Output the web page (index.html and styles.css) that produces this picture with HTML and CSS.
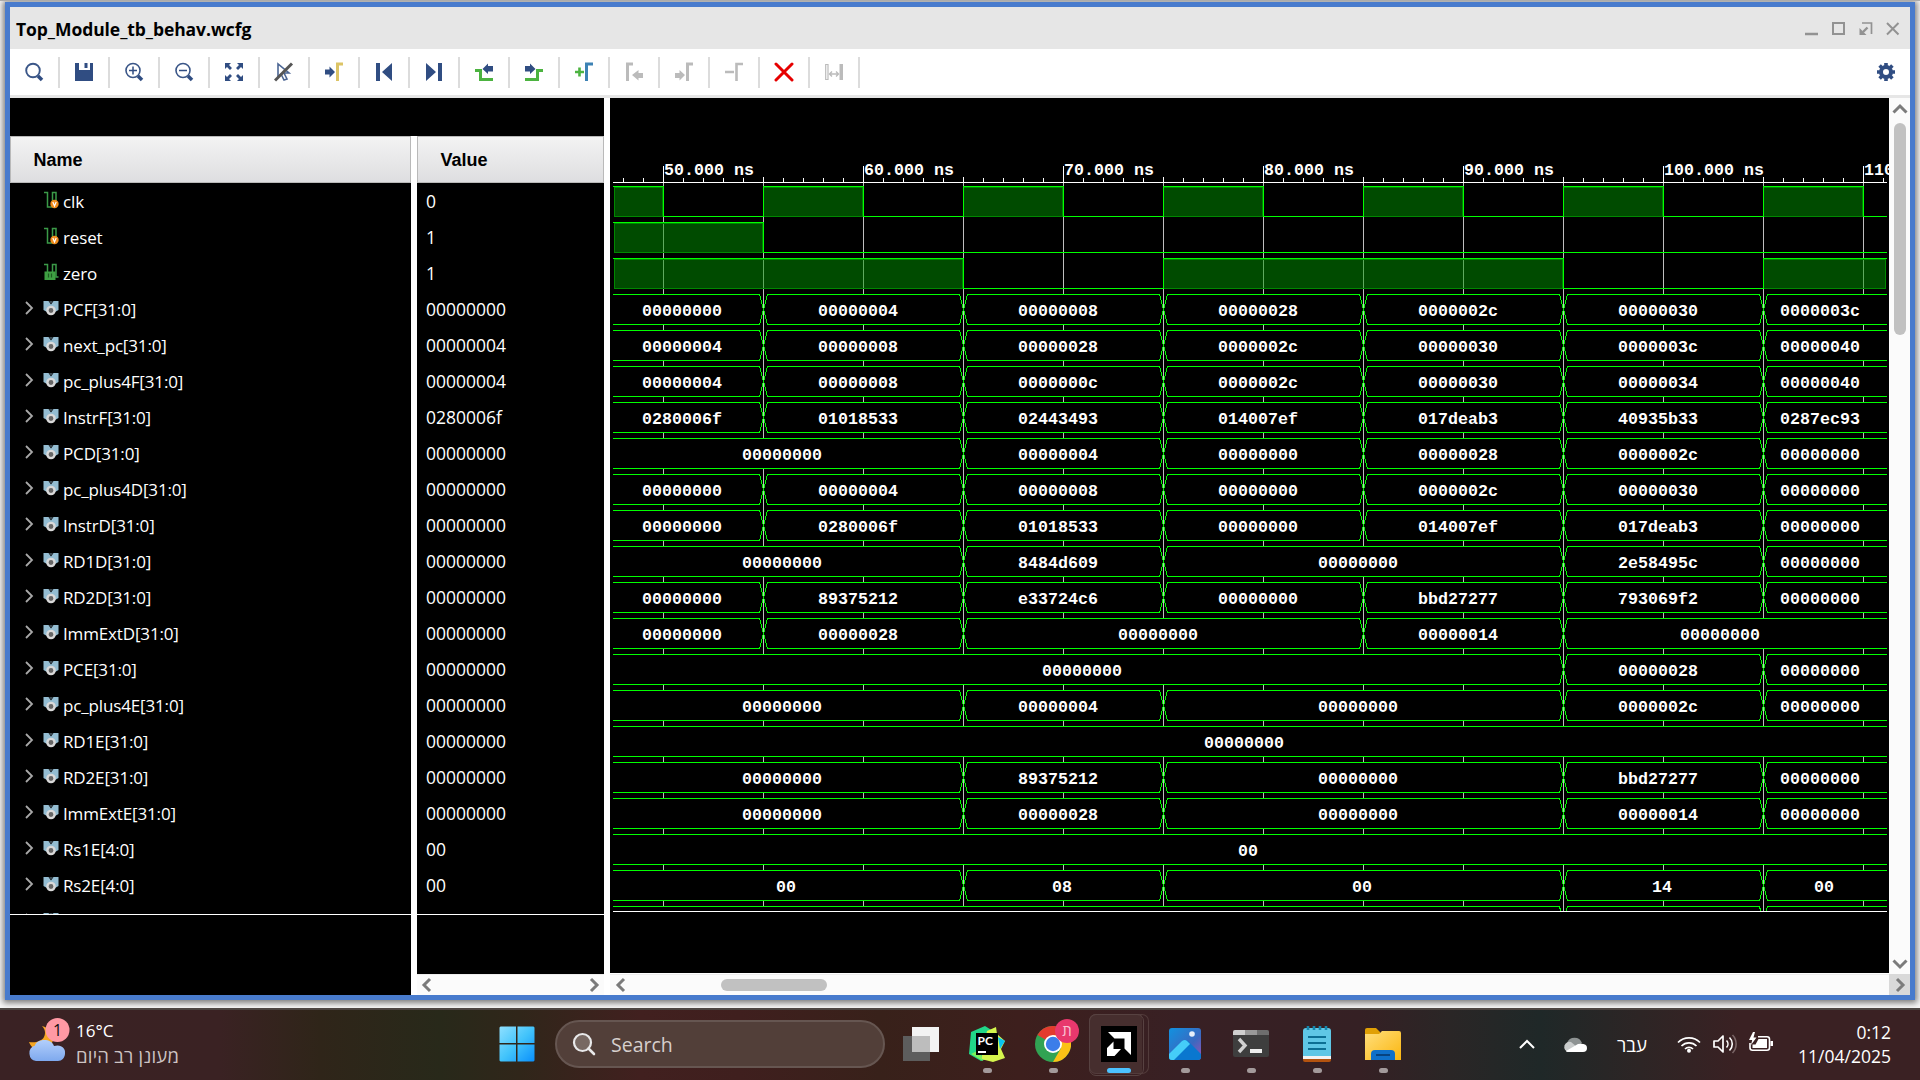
FILE: index.html
```html
<!DOCTYPE html>
<html lang="en">
<head>
<meta charset="utf-8">
<title>Top_Module_tb_behav.wcfg</title>
<link rel="stylesheet" href="styles.css">
</head>
<body>
<svg class="defs" aria-hidden="true">
  <defs>
    <symbol id="i-in" viewBox="0 0 16 18">
      <path d="M0 1.500h3.500v14.500h5M8.500 12V1.500h3.500V12" fill="none" stroke="#3b9a48" stroke-width="1.500"/>
      <ellipse cx="10.500" cy="13" rx="4.200" ry="4.200" fill="#f08c1c"/>
      <path d="M8.800 11l1.700 4 1.700-4" fill="none" stroke="#fff" stroke-width="1.200"/>
    </symbol>
    <symbol id="i-out" viewBox="0 0 16 18">
      <path d="M0 1.500h3.500V9M8.500 9V1.500h3.500V14h2.500" fill="none" stroke="#3b9a48" stroke-width="1.500"/>
      <path d="M.5 8.500h11V17H.5z" fill="#3fa043"/>
      <path d="M4.500 10.500v4M7.500 10.500v4" stroke="#1e5a22" stroke-width="1.200"/>
    </symbol>
    <symbol id="i-bus" viewBox="0 0 16 16">
      <path d="M.5 1h5l2.500 3.500L10.500 1h5v9L12 12H4L.5 10z" fill="#94bdd2"/>
      <path d="M6 1h4L8 4z" fill="#3c4a52"/>
      <circle cx="8" cy="10.500" r="3.600" fill="#666" stroke="#d9d9d9" stroke-width="2.400"/>
    </symbol>
  </defs>
</svg>

<main class="desktop">
  <section class="window">
    <header class="titlebar">
      <h1 class="title">Top_Module_tb_behav.wcfg</h1>
      <div class="winbtns">
        <svg viewBox="0 0 14 14"><path d="M0 12h13" stroke-width="2.500"/></svg>
        <svg viewBox="0 0 14 14"><path d="M1 1h11v11H1z" stroke-width="2"/></svg>
        <svg viewBox="0 0 14 14"><path d="M3 1h9.500v11" stroke-width="1.700"/><path d="M8.500 5.500L4 10" stroke-width="2.400"/><path d="M.5 6v7h7z" fill="#929292" stroke="none"/></svg>
        <svg viewBox="0 0 14 14"><path d="M1 1l11.500 11.500M12.500 1L1 12.500" stroke-width="2"/></svg>
      </div>
    </header>

    <nav class="toolbar">
      <span class="tool"><svg viewBox="0 0 20 20"><circle cx="9" cy="8.500" r="6.800" stroke="#3a5688" stroke-width="1.900"/><path d="M14 14l4 4" stroke="#304d82" stroke-width="3.500"/></svg></span>
      <span class="tool"><svg viewBox="0 0 20 20"><path d="M1 1h4v7h11V1h3v18H1z" fill="#304d82"/><path d="M10.500 1h3v5h-3z" fill="#304d82"/></svg></span>
      <span class="tool"><svg viewBox="0 0 20 20"><circle cx="9" cy="8.500" r="7" stroke="#3a5688" stroke-width="1.600"/><path d="M5 8.500h8M9 4.500v8" stroke="#304d82" stroke-width="1.500"/><path d="M14 14l4 4" stroke="#304d82" stroke-width="3.500"/></svg></span>
      <span class="tool"><svg viewBox="0 0 20 20"><circle cx="9" cy="8.500" r="7" stroke="#3a5688" stroke-width="1.600"/><path d="M5 8.500h8" stroke="#304d82" stroke-width="1.500"/><path d="M14 14l4 4" stroke="#304d82" stroke-width="3.500"/></svg></span>
      <span class="tool"><svg viewBox="0 0 20 20"><path d="M1 1h6L5 3l3 3-2 2-3-3-2 2zM19 1h-6l2 2-3 3 2 2 3-3 2 2zM1 19h6l-2-2 3-3-2-2-3 3-2-2zM19 19h-6l2-2-3-3 2-2 3 3 2-2z" fill="#304d82"/></svg></span>
      <span class="tool"><svg viewBox="0 0 20 20"><path d="M4 2v13l3-3 3 6 3-1-3-6h5z" stroke="#4c6694" stroke-width="1.600"/><path d="M1 18.500L18 1.500" stroke="#555" stroke-width="3"/></svg></span>
      <span class="tool"><svg viewBox="0 0 20 20"><path d="M1 7.500h4.500V4.500L11 10l-5.500 5.500v-3H1z" fill="#304d82"/><path d="M13.500 19V2H19" stroke="#dcc466" stroke-width="3"/></svg></span>
      <span class="tool"><svg viewBox="0 0 20 20"><path d="M2 1h4v18H2zM18 1v18L8 10z" fill="#304d82"/></svg></span>
      <span class="tool"><svg viewBox="0 0 20 20"><path d="M14 1h4v18h-4zM2 1v18l10-9z" fill="#304d82"/></svg></span>
      <span class="tool"><svg viewBox="0 0 20 20"><path d="M1 8.500h5.500v9H19" stroke="#4cb340" stroke-width="3"/><path d="M19 4h-5V1.500L8.500 7l5.500 5V9.500h5z" fill="#304d82"/></svg></span>
      <span class="tool"><svg viewBox="0 0 20 20"><path d="M19 8.500h-5.500v9H1" stroke="#4cb340" stroke-width="3"/><path d="M1 4h5V1.500L11.500 7 6 12V9.500H1z" fill="#304d82"/></svg></span>
      <span class="tool"><svg viewBox="0 0 20 20"><path d="M1 10h9M5.500 5.500v9" stroke="#4cb340" stroke-width="2.600"/><path d="M12.500 19V2H19" stroke="#3d82b4" stroke-width="3"/></svg></span>
      <span class="tool off"><svg viewBox="0 0 20 20"><path d="M3.500 19V2H9" stroke="#bbb" stroke-width="3"/><path d="M19 11h-4.500V8L8 13l6.500 5.500V16H19z" fill="#bbb"/></svg></span>
      <span class="tool off"><svg viewBox="0 0 20 20"><path d="M13.500 19V2H19" stroke="#bbb" stroke-width="3"/><path d="M1 11h4.500V8L11 13l-5.500 5.500V16H1z" fill="#bbb"/></svg></span>
      <span class="tool off"><svg viewBox="0 0 20 20"><path d="M12.500 19V2H19M1 10h9" stroke="#bbb" stroke-width="2.600"/></svg></span>
      <span class="tool"><svg viewBox="0 0 20 20"><path d="M2 2l16 16M18 2L2 18" stroke="#e60000" stroke-width="3" stroke-linecap="round"/></svg></span>
      <span class="tool off"><svg viewBox="0 0 20 20"><path d="M1.700 2.500h2.300v15H1.700z" stroke="#bbb" stroke-width="1.200"/><path d="M15.500 2h3.500v16h-3.500z" fill="#bbb"/><path d="M5.500 12h9M8 9.500L5.500 12 8 14.500M12 9.500l2.500 2.500-2.500 2.500" stroke="#bbb" stroke-width="1.400"/></svg></span>
      <svg class="gear" viewBox="0 0 20 20"><circle cx="10" cy="10" r="5" fill="none" stroke="#304d82" stroke-width="4"/><path d="M10 1v3M10 16v3M1 10h3M16 10h3M3.600 3.600l2 2M14.400 14.400l2 2M3.600 16.400l2-2M14.400 5.600l2-2" stroke="#304d82" stroke-width="3.600"/></svg>
    </nav>

    <div class="panes">
      <div class="signals">
        <div class="col names">
          <div class="head">Name</div>
          <div class="rows" id="names"></div>
          <div class="rest"></div>
        </div>
        <div class="col values">
          <div class="head">Value</div>
          <div class="rows" id="values"></div>
          <div class="rest"></div>
          <div class="hbar">
            <svg viewBox="0 0 12 16"><path d="M9 2L3 8l6 6"/></svg>
            <svg viewBox="0 0 12 16"><path d="M3 2l6 6-6 6"/></svg>
          </div>
        </div>
      </div>
      <div class="wavepane">
        <svg id="wave" class="wave" viewBox="610 98 1279 875"></svg>
        <div class="vbar">
          <svg viewBox="0 0 16 12"><path d="M1.500 9.500L8 3l6.500 6.500"/></svg>
          <div class="vthumb"></div>
          <svg viewBox="0 0 16 12"><path d="M1.500 2.500L8 9l6.500-6.500"/></svg>
        </div>
        <div class="hbar wide">
          <svg viewBox="0 0 12 16"><path d="M9 2L3 8l6 6"/></svg>
          <div class="hthumb"></div>
        </div>
        <div class="corner"><svg viewBox="0 0 12 16"><path d="M3 2l6 6-6 6"/></svg></div>
      </div>
    </div>
  </section>
</main>

<footer class="taskbar">
  <div class="weather">
    <svg class="wicon" viewBox="0 0 44 46">
      <defs><linearGradient id="cl" x1="0" y1="0" x2="0" y2="1"><stop offset="0" stop-color="#b3cffb"/><stop offset="1" stop-color="#7ea9ee"/></linearGradient></defs>
      <path d="M14 9c3 3 4 7 2 11s-8 6-15 5c2 6 8 9 14 8 8-2 12-9 9-16-2-4-6-7-10-8z" fill="#f5a623"/>
      <path d="M8 44a8 8 0 0 1-1-15.500C8 22 23 20 26 29c7-2 12 2 11 8-.5 4-3 7-7 7z" fill="url(#cl)"/>
      <circle cx="29.500" cy="13" r="12" fill="#ff99a4"/>
      <text x="29.500" y="19" text-anchor="middle" class="badge">1</text>
    </svg>
    <div class="wtext"><span>16°C</span><span class="dim" dir="rtl">מעונן רב היום</span></div>
  </div>

  <div class="apps">
    <svg class="start" viewBox="0 0 36 36">
      <defs><linearGradient id="ws" x1="0" y1="0" x2="1" y2="1"><stop offset="0" stop-color="#8fe0ff"/><stop offset=".5" stop-color="#43c4fb"/><stop offset="1" stop-color="#0a90fb"/></linearGradient></defs>
      <path d="M1.500.5H17v16.500H.5V1.500zM18.500.5H34.500l1 1V17h-17zM.5 18.500H17V35.500H1.500l-1-1zM18.500 18.500h17v16l-1 1h-16z" fill="url(#ws)"/>
    </svg>
    <div class="search">
      <svg viewBox="0 0 24 24"><circle cx="10.500" cy="10.500" r="8.500" fill="#776862" stroke="#e9e9ea" stroke-width="2.200"/><path d="M16.500 16.500l5.500 5.500" stroke="#e9e9ea" stroke-width="2.600" stroke-linecap="round"/></svg>
      <span>Search</span>
    </div>
    <div class="app"><svg viewBox="0 0 36 36"><path d="M9 1h27v25H9z" fill="#f3f3f3"/><path d="M0 10h27v25H0z" fill="#5d5d5d"/><path d="M9 10h18v16H9z" fill="#bdbdbd"/></svg></div>
    <div class="app run"><svg viewBox="0 0 36 36"><path d="M2 6l14-6 8 5v26l-12 4L0 28z" fill="#21d789"/><path d="M18 5l9-4 1 7 8 7-4 8 4 9-12 4-12-3z" fill="#d5f54d"/><path d="M29 11l7 4-5 8z" fill="#07c3f2"/><path d="M2 28l8-4 4 11z" fill="#7cf05b"/><path d="M7 7h22v22H7z"/><path d="M9 25h8v2H9z" fill="#fff"/><text x="8.500" y="18.500" class="pc">PC</text></svg></div>
    <div class="app run"><svg viewBox="0 0 36 36"><circle cx="18" cy="18" r="18" fill="#31a353"/><path d="M18 18L2.400 9A18 18 0 0 1 33.600 9z" fill="#e33b2e"/><path d="M18 9h15.600A18 18 0 0 1 18 36l7.800-13.500z" fill="#fbc116"/><circle cx="18" cy="18" r="9" fill="#fff"/><circle cx="18" cy="18" r="7.200" fill="#3b7de9"/></svg><span class="avatar">ת</span></div>
    <div class="app run active"><svg viewBox="0 0 36 36"><path d="M0 0h36v36H0z"/><path d="M7 6h23v23l-6.500-6.500V12.500H13.500z" fill="#fff"/><path d="M12.500 15.500V23H20l-6.500 7H6v-8z" fill="#fff"/></svg></div>
    <div class="app run"><svg viewBox="0 0 36 36"><defs><linearGradient id="ph" x1="0" y1="0" x2="1" y2="1"><stop offset="0" stop-color="#1192e0"/><stop offset=".6" stop-color="#3a69c0"/><stop offset="1" stop-color="#9a52b5"/></linearGradient></defs><rect x="2" y="2" width="32" height="32" rx="3" fill="url(#ph)"/><path d="M2 29l13-14q3-2 6 0l13 13v3q0 3-3 3H5q-3 0-3-3z" fill="#0a77cf"/><path d="M2 28l13-13q3-2 5 0l3 3L7 34H5q-3 0-3-3z" fill="#45cdf8"/><circle cx="25" cy="8" r="2.800" fill="#e6effa"/></svg></div>
    <div class="app run"><svg viewBox="0 0 36 36"><rect y="4" width="36" height="27" rx="2" fill="#3e3e3e"/><path d="M0 9V6q0-2 2-2h10v5z" fill="#cfcfcf"/><path d="M12 4h12v5H12z" fill="#999"/><path d="M24 4h10q2 0 2 2v3H24z" fill="#6e6e6e"/><path d="M6 13l6 6.500L6 26" fill="none" stroke="#d0d0d0" stroke-width="3.400"/><path d="M17 23h12v4H17z" fill="#eee"/></svg></div>
    <div class="app run"><svg viewBox="0 0 36 36"><path d="M4 32h28v2q0 2-2 2H6q-2 0-2-2z" fill="#b4530f"/><path d="M4 29h28v4H4z" fill="#f3f3f3"/><path d="M4 5q0-3 3-3h22q3 0 3 3v25H4z" fill="#5fc7e6"/><path d="M9 11h18M9 17h18M9 23h18" stroke="#0c6f94" stroke-width="2"/><path d="M9 0v4M15 0v4M21 0v4M27 0v4" stroke="#1587ad" stroke-width="2.600"/></svg></div>
    <div class="app run"><svg viewBox="0 0 36 36"><defs><linearGradient id="fo" x1="0" y1="0" x2="1" y2="1"><stop offset="0" stop-color="#ffdf7d"/><stop offset="1" stop-color="#fbb60f"/></linearGradient></defs><path d="M0 4q0-2 2-2h9l4 4v4H0z" fill="#e0a005"/><path d="M0 8h14l3-3h17q2 0 2 2v27H0z" fill="url(#fo)"/><path d="M6 34V28q0-4 4-4h16q4 0 4 4v6z" fill="#0f70c9"/><path d="M11 29h14" stroke="#073f78" stroke-width="1.800"/></svg></div>
  </div>

  <div class="tray">
    <svg class="up" viewBox="0 0 16 10"><path d="M1 9l7-7 7 7" fill="none" stroke="#fff" stroke-width="2"/></svg>
    <svg class="cloud" viewBox="0 0 24 17"><path d="M4 7a8 8 0 0 1 15 0l-7 6z" fill="#8e9393"/><path d="M5 16a5 5 0 1 1 3-10l12 10z" fill="#c9cccc"/><path d="M3 15l12-7q9-1 9 4 0 4-4 4H5q-2 0-2-1z" fill="#fff"/></svg>
    <span class="lang">עבר</span>
    <svg class="wifi" viewBox="0 0 24 18"><path d="M1 7.500a15.500 15.500 0 0 1 22 0M4.500 11a10.500 10.500 0 0 1 15 0M8 14a5.800 5.800 0 0 1 8 0" fill="none" stroke="#fff" stroke-width="1.700"/><circle cx="12" cy="15.800" r="2" fill="#fff"/></svg>
    <svg class="spk" viewBox="0 0 24 20"><path d="M1 7h4l5-5v16l-5-5H1z" fill="none" stroke="#fff" stroke-width="1.700" stroke-linejoin="round"/><path d="M13.500 6.500a5 5 0 0 1 0 7M16.500 3.500a9 9 0 0 1 0 13" fill="none" stroke="#fff" stroke-width="1.600"/><path d="M19.500 1a13 13 0 0 1 0 18" fill="none" stroke="#7a6566" stroke-width="1.600"/></svg>
    <svg class="bat" viewBox="0 0 24 20"><path d="M9 4.800h9q2.500 0 2.500 2.500v8.400q0 2.500-2.500 2.500H3.500Q1 18.200 1 15.700V11" fill="none" stroke="#fff" stroke-width="1.600"/><path d="M9.500 7H18v9H3.500v-3.500h3z" fill="#fff"/><path d="M21.500 9H24v5h-2.500zM4 0L0 8h3.200L2 13l5.500-7.500H4.500L6 0z" fill="#fff"/></svg>
    <div class="clock"><span>0:12</span><span>11/04/2025</span></div>
  </div>
</footer>
<script src="wave.js"></script>
</body>
</html>
```
FILE: styles.css
```css
* { box-sizing: border-box; }
body {
  margin: 0;
  width: 1920px;
  height: 1080px;
  overflow: hidden;
  display: flex;
  flex-direction: column;
  background: #fff;
  font-family: "Open Sans", "Noto Sans", sans-serif;
}
.defs { position: absolute; width: 0; height: 0; }
.desktop {
  height: 1008px;
  padding: 1px 5px 8px;
  border-top: 1px solid #ababab;
  background: #f7f7f7;
  overflow: hidden;
}
.window {
  height: 998px;
  border: 5px solid #487bcd;
  background: #fff;
  box-shadow: 0 1px 6px 2px rgba(0, 0, 0, .5);
  display: flex;
  flex-direction: column;
}
.titlebar {
  height: 42px;
  background: #e6e6e6;
  display: flex;
  justify-content: space-between;
  align-items: center;
  padding: 2px 10px 0 6px;
}
.title { margin: 0; font-size: 17.5px; font-weight: 700; letter-spacing: -.07px; }
.winbtns { display: flex; gap: 13px; }
.winbtns svg { width: 14px; height: 14px; fill: none; stroke: #929292; }
.toolbar {
  height: 49px;
  border-bottom: 3px solid #e6e6e6;
  display: flex;
  align-items: center;
}
.tool {
  width: 50px;
  height: 31px;
  border-right: 2px solid #dcdcdc;
  display: flex;
  align-items: center;
  justify-content: center;
}
.tool svg { width: 20px; height: 20px; fill: none; }
.gear { width: 20px; height: 20px; margin-left: auto; margin-right: 14px; }

.panes { flex: 1; display: flex; gap: 6px; }
.signals {
  width: 594px;
  display: flex;
  gap: 6px;
  border-top: 38px solid #000;
}
.col { display: flex; flex-direction: column; }
.names { width: 401px; }
.values { width: 187px; }
.head {
  height: 47px;
  border: 1px solid #b9b9b9;
  background: linear-gradient(#f3f3f3, #dedee0);
  font: bold 18px/47px "Liberation Sans", Arial, sans-serif;
  padding-left: 22.5px;
}
.rows { height: 731px; overflow: hidden; background: #000; }
.rest { flex: 1; background: #000; border-top: 1px solid #fff; }
.row {
  height: 36px;
  display: flex;
  align-items: center;
  color: #fff;
  font-size: 17px;
  white-space: nowrap;
}
.names .row { padding-left: 14px; letter-spacing: -.15px; }
.values .row { padding-left: 9px; font-size: 17.5px; }
.row .chev { width: 10px; height: 14px; fill: none; stroke: #a8a8a8; stroke-width: 1.8; margin: 0 9px 2px 0; }
.row .kind { width: 16px; height: 16px; margin: 0 4px 3px 0; }
.row .kind.bit { height: 18px; margin-left: 20px; margin-right: 3px; }

.hbar {
  height: 21px;
  background: #fbfbfb;
  border-top: 1px solid #ededed;
  display: flex;
  align-items: center;
  justify-content: space-between;
  padding: 0 4px;
}
.hbar svg, .corner svg { width: 12px; height: 16px; }
.hbar path, .vbar path, .corner path { fill: none; stroke: #7b7b7b; stroke-width: 3; }
.wavepane {
  width: 1300px;
  display: grid;
  grid-template-columns: 1279px 21px;
  grid-template-rows: 876px 21px;
}
.wave { width: 1279px; height: 875px; background: #000; display: block; }
.wave text {
  font: bold 16.67px "Courier New", "Liberation Mono", monospace;
  fill: #fff;
}
.hbar.wide { justify-content: flex-start; gap: 94px; padding-left: 5px; }
.hthumb { width: 106px; height: 12px; border-radius: 6px; background: #c1c1c1; }
.vbar {
  background: #fbfbfb;
  display: flex;
  flex-direction: column;
  align-items: center;
  padding: 5px 0 4px;
}
.vbar svg { width: 16px; height: 12px; }
.vthumb { width: 12px; height: 212px; border-radius: 6px; background: #c1c1c1; margin: 8px 0 auto; }
.corner { background: #d9d9d9; display: flex; align-items: center; justify-content: center; }

.taskbar {
  height: 72px;
  border-top: 2px solid #4d4643;
  display: flex;
  align-items: stretch;
  background: linear-gradient(90deg, #3a2224 0, #3a2223 220px, #2f2519 320px, #28291a 440px, #30261a 520px, #41201f 640px, #3f1f1e 740px, #38211a 880px, #3d1f1d 1020px, #382024 1180px, #352024 1360px, #2a2626 1450px, #1f2828 1540px, #2d2525 1640px, #3a2123 1740px, #3a2123 1920px);
  color: #fff;
}
.weather { width: 500px; padding: 7px 0 0 28px; display: flex; gap: 4px; }
.wicon { width: 44px; height: 46px; }
.badge { font-size: 16px; fill: #111; }
.wtext { display: flex; flex-direction: column; align-items: flex-start; font-size: 17px; line-height: 24px; padding-top: 2px; }
.wtext .dim { color: #cdc4c4; font-size: 18.5px; letter-spacing: .2px; line-height: 26px; }
.apps { width: 920px; display: flex; align-items: flex-start; }
.start { width: 36px; height: 36px; margin: 16px 19px 0 -1px; }
.search {
  width: 330px;
  height: 48px;
  margin: 10px 3px 0 1px;
  border: 2px solid #665651;
  border-radius: 24px;
  background: #523f39;
  display: flex;
  align-items: center;
  gap: 15px;
  padding-left: 15px;
  font-size: 19.5px;
  color: #d6cfcd;
}
.search svg { width: 24px; height: 24px; }
.app {
  width: 60px;
  height: 60px;
  margin: 4px 3px 0;
  display: flex;
  justify-content: center;
  padding-top: 12px;
  position: relative;
}
.app svg { width: 36px; height: 36px; }
.run::after {
  content: "";
  position: absolute;
  left: 26px;
  bottom: 1px;
  width: 9px;
  height: 5px;
  border-radius: 3px;
  background: #a39a9b;
}
.active {
  background: linear-gradient(#462e2e, #462e2e) 0 0 / 53px 60px no-repeat;
  border-radius: 7px;
  box-shadow: inset 0 0 0 1px #523b3b;
}
.active::before {
  content: "";
  position: absolute;
  left: 0;
  top: 0;
  width: 53px;
  height: 60px;
  border: 1px solid #574241;
  border-radius: 7px;
}
.active svg { position: relative; }
.active::after { left: 18px; width: 24px; background: #4cc2ff; }
.avatar {
  position: absolute;
  left: 32px;
  top: 5px;
  width: 24px;
  height: 24px;
  border-radius: 50%;
  background: #e8386d;
  color: #f9c4d4;
  font-size: 15px;
  line-height: 22px;
  text-align: center;
}
.pc { font: bold 12px Lato, sans-serif; fill: #fff; }
.tray { flex: 1; display: flex; align-items: center; padding: 0 29px 2px 99px; }
.tray svg { flex: none; }
.up { width: 16px; height: 10px; }
.cloud { width: 24px; height: 17px; margin-left: 28px; }
.lang { width: 32px; margin: 0 29px; font-size: 18.5px; text-align: center; }
.wifi { width: 24px; height: 18px; }
.spk { width: 24px; height: 20px; margin-left: 12px; }
.bat { width: 24px; height: 20px; margin: 0 0 4px 12px; }
.clock {
  margin-left: auto;
  display: flex;
  flex-direction: column;
  align-items: flex-end;
  font-size: 17.500px;
  line-height: 24px;
}
```
FILE: wave.js
```js
const LEFT = 613, RIGHT = 1887, AXIS = 182, BOTTOM = 911, PITCH = 36;

// Each bus lists [start, value] pairs; a segment runs to the next start.
const Z = "00000000";
const A = LEFT, B = 763, C = 963, D = 1163, E = 1363, F = 1563, G = 1763;
const bits = [
  ["clk", "0", [[A, 663], [B, 863], [C, 1063], [D, 1263], [E, 1463], [F, 1663], [G, 1863]]],
  ["reset", "1", [[A, B]]],
  ["zero", "1", [[A, C], [D, F], [G, RIGHT]]],
];
const buses = [
  ["PCF[31:0]", Z, [[A, Z], [B, "00000004"], [C, "00000008"], [D, "00000028"], [E, "0000002c"], [F, "00000030"], [G, "0000003c"]]],
  ["next_pc[31:0]", "00000004", [[A, "00000004"], [B, "00000008"], [C, "00000028"], [D, "0000002c"], [E, "00000030"], [F, "0000003c"], [G, "00000040"]]],
  ["pc_plus4F[31:0]", "00000004", [[A, "00000004"], [B, "00000008"], [C, "0000000c"], [D, "0000002c"], [E, "00000030"], [F, "00000034"], [G, "00000040"]]],
  ["InstrF[31:0]", "0280006f", [[A, "0280006f"], [B, "01018533"], [C, "02443493"], [D, "014007ef"], [E, "017deab3"], [F, "40935b33"], [G, "0287ec93"]]],
  ["PCD[31:0]", Z, [[A, Z], [C, "00000004"], [D, Z], [E, "00000028"], [F, "0000002c"], [G, Z]]],
  ["pc_plus4D[31:0]", Z, [[A, Z], [B, "00000004"], [C, "00000008"], [D, Z], [E, "0000002c"], [F, "00000030"], [G, Z]]],
  ["InstrD[31:0]", Z, [[A, Z], [B, "0280006f"], [C, "01018533"], [D, Z], [E, "014007ef"], [F, "017deab3"], [G, Z]]],
  ["RD1D[31:0]", Z, [[A, Z], [C, "8484d609"], [D, Z], [F, "2e58495c"], [G, Z]]],
  ["RD2D[31:0]", Z, [[A, Z], [B, "89375212"], [C, "e33724c6"], [D, Z], [E, "bbd27277"], [F, "793069f2"], [G, Z]]],
  ["ImmExtD[31:0]", Z, [[A, Z], [B, "00000028"], [C, Z], [E, "00000014"], [F, Z]]],
  ["PCE[31:0]", Z, [[A, Z], [F, "00000028"], [G, Z]]],
  ["pc_plus4E[31:0]", Z, [[A, Z], [C, "00000004"], [D, Z], [F, "0000002c"], [G, Z]]],
  ["RD1E[31:0]", Z, [[A, Z]]],
  ["RD2E[31:0]", Z, [[A, Z], [C, "89375212"], [D, Z], [F, "bbd27277"], [G, Z]]],
  ["ImmExtE[31:0]", Z, [[A, Z], [C, "00000028"], [D, Z], [F, "00000014"], [G, Z]]],
  ["Rs1E[4:0]", "00", [[A, "00"]]],
  ["Rs2E[4:0]", "00", [[A, "00"], [C, "08"], [D, "00"], [F, "14"], [G, "00"]]],
  ["", "", [[A, ""], [F, ""], [G, ""]]],
];

const chevron = '<svg class="chev" viewBox="0 0 10 14"><path d="M2 1l6 6-6 6"/></svg>';
let names = "", values = "";
bits.forEach(([name, value], i) => {
  const icon = i === 2 ? "i-out" : "i-in";
  names += `<div class="row"><svg class="kind bit"><use href="#${icon}"/></svg>${name}</div>`;
  values += `<div class="row">${value}</div>`;
});
buses.forEach(([name, value]) => {
  names += `<div class="row">${chevron}<svg class="kind"><use href="#i-bus"/></svg>${name}</div>`;
  values += `<div class="row">${value}</div>`;
});
document.getElementById("names").innerHTML = names;
document.getElementById("values").innerHTML = values;

const rect = (x, y, w, h, fill) => `<rect x="${x}" y="${y}" width="${w}" height="${h}" fill="${fill}"/>`;
const GREEN = "#00ff00";
let out = "";

for (let x = 663; x < RIGHT; x += 100) out += rect(x, AXIS, 1, BOTTOM - AXIS, "#bebebe");
out += rect(LEFT, AXIS, RIGHT - LEFT, 1, "#fff");
for (let x = 623; x < RIGHT; x += 20) {
  const t = (x - 663) % 200 === 0 ? 166 : (x - 663) % 100 === 0 ? 177 : 178;
  out += rect(x, t, 1, AXIS - t, "#fff");
}
for (let n = 0; n < 7; n++) {
  out += `<text x="${664 + n * 200}" y="175">${50 + n * 10}.000 ns</text>`;
}

bits.forEach(([, , highs], i) => {
  const top = 186 + i * PITCH;
  let at = LEFT;
  highs.forEach(([s, e]) => {
    if (s > at) out += rect(at, top + 30, s - at, 1, GREEN);
    const l = s === LEFT ? s + 1 : s;
    const r = e === RIGHT ? e - 1 : e;
    out += rect(l, top + 1, r - l, 30, "rgba(0,150,0,.5)");
    out += `<rect x="${l + .5}" y="${top + 1.5}" width="${r - l - 1}" height="29" fill="none" stroke="#008700"/>`;
    out += rect(s, top, e - s, 1, GREEN);
    if (s > LEFT) out += rect(s, top, 1, 31, GREEN);
    if (e < RIGHT) out += rect(e, top, 1, 31, GREEN);
    at = e;
  });
  if (at < RIGHT) out += rect(at, top + 30, RIGHT - at, 1, GREEN);
});

let fills = "", lines = "", labels = "";
buses.forEach(([, , segs], i) => {
  const t = 294.5 + i * PITCH, b = t + 30, m = t + 15;
  segs.forEach(([s, v], k) => {
    const last = k === segs.length - 1;
    const e = last ? RIGHT : segs[k + 1][0];
    const l = k ? s + 4.5 : s, r = last ? e : e - 3.5;
    const lm = k ? s + .5 : s, rm = last ? e : e + .5;
    fills += `<path d="M${l} ${t}H${r}L${rm} ${m}L${r} ${b}H${l}L${lm} ${m}z"/>`;
    // The first and last segments run off the view, so they have no end cap.
    const open = y => (k ? `M${lm} ${m}L${l} ${y}` : `M${l} ${y}`) + `H${r}` + (last ? "" : `L${rm} ${m}`);
    lines += `<path d="${open(t)}${open(b)}"/>`;
    if (v) {
      const x = (s + e) / 2 - v.length * 5 - (v.length > 2 ? 5 : 1) - (k ? 0 : 1);
      labels += `<text x="${x}" y="${t + 21.5}">${v}</text>`;
    }
  });
});
out += `<clipPath id="view"><rect x="${LEFT}" y="98" width="${RIGHT - LEFT}" height="${BOTTOM - 98}"/></clipPath>`;
out += `<g clip-path="url(#view)"><g fill="#000">${fills}</g>`;
out += `<g fill="none" stroke="${GREEN}" shape-rendering="crispEdges">${lines}</g></g>${labels}`;
out += rect(LEFT, BOTTOM, RIGHT - LEFT, 1, "#fff");
document.getElementById("wave").innerHTML = out;
```
